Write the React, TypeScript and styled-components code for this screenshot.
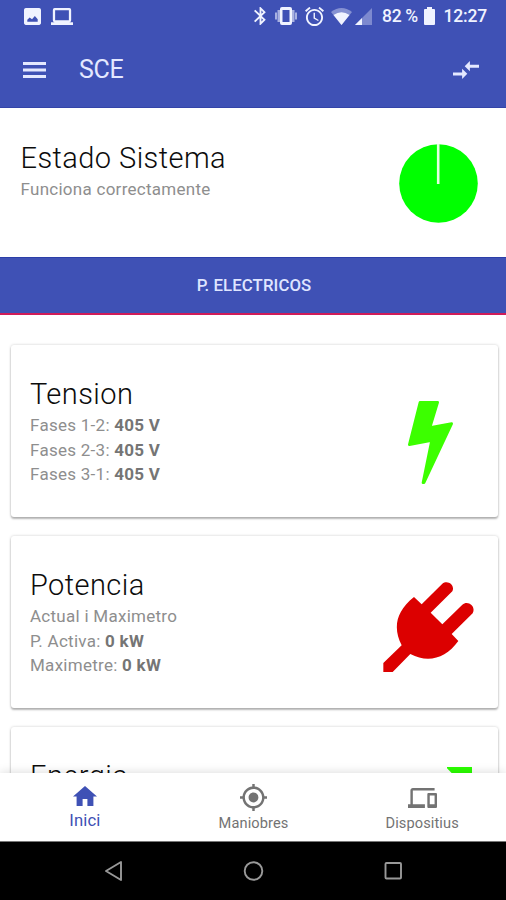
import React from 'react';
import styled, { createGlobalStyle } from 'styled-components';

const Global = createGlobalStyle`
  * { box-sizing: border-box; }
  html, body { margin: 0; padding: 0; background: #fff; }
  body { font-family: Roboto, 'Liberation Sans', sans-serif; overflow: hidden; }
  svg { display: block; flex: none; }
`;

const Screen = styled.div`
  width: 506px;
  height: 900px;
  display: flex;
  flex-direction: column;
  overflow: hidden;
  background: #fff;
`;

const Header = styled.header`
  flex: none;
  height: 108px;
  background: #3f51b5;
  color: #e4e8ff;
  border-bottom: 1px solid #3444a8;
`;

const StatusBar = styled.div`
  height: 32px;
  padding: 0 17.5px 0 24px;
  display: flex;
  align-items: center;
  color: #f0f3ff;
`;

const Gap = styled.span<{ $w: number }>`
  flex: none;
  width: ${(p) => p.$w}px;
`;

const Spacer = styled.span`
  flex: 1;
`;

const StatusText = styled.span<{ $w: number; $track: number }>`
  flex: none;
  width: ${(p) => p.$w}px;
  font-size: 17.5px;
  font-weight: 550;
  line-height: 32px;
  letter-spacing: ${(p) => p.$track}px;
  white-space: nowrap;
`;

const AppBar = styled.div`
  height: 75px;
  padding: 0 27px 0 23px;
  display: flex;
  align-items: center;
`;

const AppTitle = styled.h1`
  margin: 0 auto 0 33px;
  font-size: 25px;
  font-weight: 400;
  line-height: 30px;
  letter-spacing: -0.3px;
`;

const Summary = styled.section`
  flex: none;
  height: 149px;
  padding: 34px 28px 0 20.5px;
  display: flex;
  justify-content: space-between;
`;

const Title = styled.h2`
  margin: 0;
  font-size: 29px;
  font-weight: 360;
  line-height: 32px;
  letter-spacing: 0.43px;
  color: #0c0c0c;
`;

const Line = styled.p`
  margin: 0;
  font-size: 17px;
  line-height: 24.6px;
  letter-spacing: 0.27px;
  color: #8e8e8e;
  white-space: nowrap;
  b { font-weight: 700; color: #757575; }
`;

const Lines = styled.div`
  padding-top: 3px;
`;

const TabBand = styled.div`
  flex: none;
  height: 58px;
  background: #3f51b5;
  border-top: 1px solid #2b3ea8;
  border-bottom: 2px solid #d01c58;
  display: flex;
  align-items: center;
  justify-content: center;
  font-size: 16.8px;
  font-weight: 550;
  letter-spacing: 0.08px;
  color: #dfe5ff;
  padding: 0 0 2px 2px;
`;

const Feed = styled.main`
  flex: 1;
  min-height: 0;
  overflow: hidden;
  padding: 30px 8px 0 11px;
  display: flex;
  flex-direction: column;
  gap: 19px;
`;

const Card = styled.article`
  flex: none;
  height: 172px;
  padding: 33px 0 0 19px;
  display: flex;
  justify-content: space-between;
  border-radius: 3px;
  background: #fff;
  box-shadow: 0 2px 2px rgba(0, 0, 0, 0.26), 0 0 3px rgba(0, 0, 0, 0.2);
`;

const Art = styled.div<{ $top: number; $right: number }>`
  padding: ${(p) => p.$top}px ${(p) => p.$right}px 0 0;
`;

const BottomNav = styled.nav`
  flex: none;
  height: 69px;
  display: grid;
  grid-template-columns: repeat(3, 1fr);
  padding: 0 -1px;
  background: #fff;
  border-bottom: 1px solid #777;
  box-shadow: 0 -1px 9px rgba(0, 0, 0, 0.13);
  z-index: 1;
`;

const NavItem = styled.a<{ $active?: boolean }>`
  display: flex;
  flex-direction: column;
  align-items: center;
  padding-left: 1px;
  color: ${(p) => (p.$active ? '#3f51b5' : '#737373')};
  font-size: ${(p) => (p.$active ? 16.7 : 14.6)}px;
  letter-spacing: 0.1px;
  line-height: 20px;
`;

const NavIcon = styled.span<{ $drop?: number }>`
  height: ${(p) => 38 + (p.$drop ?? 0)}px;
  padding-top: ${(p) => (p.$drop ? 9 : 8)}px;
  display: flex;
  align-items: center;
`;

const SystemBar = styled.footer`
  flex: none;
  height: 58px;
  background: #000;
  display: flex;
  align-items: center;
  padding-left: 105px;
`;

type IconProps = { box: string; w: number; h: number; d: string };
const Icon = ({ box, w, h, d }: IconProps) => (
  <svg width={w} height={h} viewBox={box} fill="currentColor" preserveAspectRatio="none">
    <path d={d} />
  </svg>
);

const cards = [
  { title: 'Tension', rows: [['Fases 1-2:', '405 V'], ['Fases 2-3:', '405 V'], ['Fases 3-1:', '405 V']] },
  { title: 'Potencia', rows: [['Actual i Maximetro', ''], ['P. Activa:', '0 kW'], ['Maximetre:', '0 kW']] },
  { title: 'Energia', rows: [] },
];

const Bolt = () => (
  <svg width="45" height="83" viewBox="165 212 135 249" fill="#3cff00" stroke="#3cff00" strokeWidth="8" strokeLinejoin="round">
    <path d="M201 216H254L231 292L296 280L213 457H210L236 330L169 343Z" />
  </svg>
);

const Plug = () => (
  <svg width="91" height="91" viewBox="90 96 273 273" fill="#dc0000">
    <path d="M183 141L206 163L268 101C284 88 307 105 298 124L233 188L268 223L328 164C345 150 370 169 359 190L296 252L316 273C278 326 225 340 172 312L119 366H91V339L146 286C120 236 127 185 183 141Z" />
  </svg>
);

const Sigma = () => (
  <svg width="25" height="66" viewBox="0 0 75 198" fill="#2bff00">
    <path d="M0 0H75V24H38L62 99L38 174H75V198H0V180L34 99L16 20L0 4Z" />
  </svg>
);

const art = [
  { top: 22.5, right: 45, el: <Bolt /> },
  { top: 13, right: 24, el: <Plug /> },
  { top: 6.5, right: 26, el: <Sigma /> },
];

export default function App() {
  return (
    <Screen>
      <Global />
      <Header>
        <StatusBar>
          <Icon box="3 3 18 18" w={17} h={17} d="M21 19V5c0-1.100-.9-2-2-2H5c-1.100 0-2 .9-2 2v14c0 1.100.9 2 2 2h14c1.100 0 2-.9 2-2zM6.500 17.500v-2l2.500-2.500 2.500 2 3-3.500 3 3.500v2.500z" />
          <Gap $w={10} />
          <Icon box="0 3 24 18" w={22} h={17} d="M4 3H20Q22 3 22 5V16Q22 18 20 18H24V21H0V18H4Q2 18 2 16V5Q2 3 4 3ZM4.500 5.500V16H19.500V5.500Z" />
          <Spacer />
          <Icon box="5 2 14 20" w={13} h={18} d="M17.710 7.710L12 2h-1v7.590L6.410 5 5 6.410 10.590 12 5 17.590 6.410 19 11 14.410V22h1l5.710-5.710-4.300-4.290 4.300-4.290zM13 5.830l1.880 1.880L13 9.590V5.830zm1.880 10.460L13 18.170v-3.760l1.880 1.880z" />
          <Gap $w={8} />
          <svg width="22" height="20" viewBox="0 0 22 20" fill="currentColor">
            <path fillRule="evenodd" d="M7 1H15Q17 1 17 3V17Q17 19 15 19H7Q5 19 5 17V3Q5 1 7 1ZM7.500 4V16H14.500V4Z" />
            <path opacity=".6" d="M2.500 4H5V16H2.500ZM0 6.500H2V13.500H0ZM17 4H19.500V16H17ZM20 6.500H22V13.500H20Z" />
          </svg>
          <Gap $w={8} />
          <Icon box="2 2 20 20" w={19} h={19} d="M22 5.720l-4.600-3.860-1.290 1.530 4.600 3.860L22 5.720zM7.880 3.390L6.600 1.860 2 5.710l1.290 1.530 4.590-3.850zM12.500 8H11v6l4.750 2.850.75-1.230-4-2.370V8zM12 4c-4.970 0-9 4.030-9 9s4.020 9 9 9c4.970 0 9-4.030 9-9s-4.030-9-9-9zm0 16c-3.870 0-7-3.130-7-7s3.130-7 7-7 7 3.130 7 7-3.130 7-7 7z" />
          <Gap $w={7} />
          <svg width="21" height="17" viewBox="0 0 21 17" fill="currentColor">
            <path opacity=".4" d="M0 4Q10.500-4 21 4L10.500 17Z" />
            <path d="M2.500 7Q10.500 1.500 18.500 7L10.500 17Z" />
          </svg>
          <Gap $w={3} />
          <svg width="17" height="17" viewBox="0 0 17 17" fill="currentColor">
            <path opacity=".35" d="M0 17L17 0V17Z" />
            <path d="M0 17L7 10V17Z" />
          </svg>
          <Gap $w={10} />
          <StatusText $w={41.5} $track={-0.3}>82 %</StatusText>
          <Icon box="0 0 11 18" w={11} h={18} d="M3 0H8V2H10Q11 2 11 3V17Q11 18 10 18H1Q0 18 0 17V3Q0 2 1 2H3Z" />
          <Gap $w={9} />
          <StatusText $w={45} $track={-0.2}>12:27</StatusText>
        </StatusBar>
        <AppBar>
          <Icon box="0 0 23 16" w={23} h={16} d="M0 0H23V3H0ZM0 6.500H23V9.500H0ZM0 13H23V16H0Z" />
          <AppTitle>SCE</AppTitle>
          <Icon box="2 5 20 14" w={26} h={18} d="M9.010 14H2v2.300h7.010v2.700L13 15l-3.990-4v3zm5.980-1v-2.700H22V8h-7.010V5L11 9l3.990 4z" />
        </AppBar>
      </Header>
      <Summary>
        <div>
          <Title>Estado Sistema</Title>
          <Lines><Line>Funciona correctamente</Line></Lines>
        </div>
        <Art $top={2} $right={0}>
          <svg width="79" height="79" viewBox="0 0 79 79">
            <circle cx="39.500" cy="39.500" r="39.300" fill="#00ff00" />
            <path d="M39.200 0V40" stroke="#e6ffe2" strokeWidth="2.600" />
          </svg>
        </Art>
      </Summary>
      <TabBand>P. ELECTRICOS</TabBand>
      <Feed>
        {cards.map((card, i) => (
          <Card key={card.title}>
            <div>
              <Title>{card.title}</Title>
              <Lines>
                {card.rows.map(([label, value]) => (
                  <Line key={label}>{label} {value && <b>{value}</b>}</Line>
                ))}
              </Lines>
            </div>
            <Art $top={art[i].top} $right={art[i].right}>{art[i].el}</Art>
          </Card>
        ))}
      </Feed>
      <BottomNav>
        <NavItem $active>
          <NavIcon><Icon box="2 3 20 17" w={24} h={20} d="M10 20v-6h4v6h5v-8h3L12 3 2 12h3v8z" /></NavIcon>
          Inici
        </NavItem>
        <NavItem>
          <NavIcon $drop={2}>
            <Icon box="1 1 22 22" w={27} h={27} d="M12 8c-2.210 0-4 1.790-4 4s1.790 4 4 4 4-1.790 4-4-1.790-4-4-4zm8.940 3c-.46-4.170-3.770-7.480-7.940-7.940V1h-2v2.060C6.830 3.520 3.520 6.830 3.060 11H1v2h2.060c.46 4.170 3.770 7.480 7.940 7.940V23h2v-2.060c4.170-.46 7.480-3.770 7.940-7.940H23v-2h-2.060zM12 19c-3.870 0-7-3.130-7-7s3.130-7 7-7 7 3.130 7 7-3.130 7-7 7z" />
          </NavIcon>
          Maniobres
        </NavItem>
        <NavItem>
          <NavIcon $drop={2}>
            <Icon box="0 4 24 16" w={29} h={20} d="M4 6h18V4H4c-1.100 0-2 .9-2 2v11H0v3h14v-3H4V6zm19 2h-6c-.55 0-1 .45-1 1v10c0 .55.45 1 1 1h6c.55 0 1-.45 1-1V9c0-.55-.45-1-1-1zm-1 9h-4v-7h4v7z" />
          </NavIcon>
          Dispositius
        </NavItem>
      </BottomNav>
      <SystemBar>
        <svg width="298" height="22" viewBox="0 0 298 22" fill="none" stroke="#999" strokeWidth="1.900" strokeLinejoin="round">
          <path d="M16 2V20L1 11Z" />
          <circle cx="148.500" cy="11" r="8.800" />
          <rect x="280.500" y="3" width="15.500" height="15.500" rx="1" />
        </svg>
      </SystemBar>
    </Screen>
  );
}
